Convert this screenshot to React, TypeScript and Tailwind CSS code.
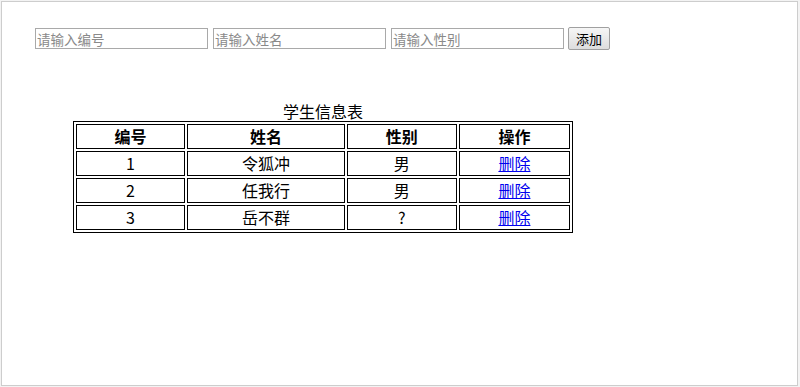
import React from "react";

const font = { fontFamily: '"Noto Sans CJK SC", "Noto Sans", sans-serif' };

const rows = [
  { id: "1", name: "令狐冲", sex: "男" },
  { id: "2", name: "任我行", sex: "男" },
  { id: "3", name: "岳不群", sex: "?" },
];

export default function App() {
  return (
    <div className="w-[800px] h-[387px] bg-[#f3f3f3] p-px" style={font}>
      <div className="h-[385px] w-[797px] border border-[#cdcdcd] bg-white">
        <div className="flex items-center gap-[5px] pl-[33px] pt-[25px]">
          <input
            className="h-[21px] w-[173px] border border-[#a9a9a9] px-[1px] text-[13.5px] leading-[19px] placeholder:text-[#8a8a8a] outline-none"
            placeholder="请输入编号"
          />
          <input
            className="h-[21px] w-[173px] border border-[#a9a9a9] px-[1px] text-[13.5px] leading-[19px] placeholder:text-[#8a8a8a] outline-none"
            placeholder="请输入姓名"
          />
          <input
            className="h-[21px] w-[173px] border border-[#a9a9a9] px-[1px] text-[13.5px] leading-[19px] placeholder:text-[#8a8a8a] outline-none"
            placeholder="请输入性别"
          />
          <button className="-ml-[1px] h-[23px] w-[42px] rounded-[2px] border border-[#a0a0a0] bg-gradient-to-b from-[#f6f6f6] to-[#dddddd] text-[13px] leading-[21px] text-black">
            添加
          </button>
        </div>
        <div className="pl-[71px] pt-[52px]">
          <table className="w-[500px] border-separate border-spacing-[2px] border border-black text-[16px] text-black">
            <caption className="h-[19px] text-center text-[16px] leading-[19px]">学生信息表</caption>
            <thead>
              <tr>
                <th className="h-[25px] w-[110px] border border-black p-0 text-center font-bold leading-[23px]">编号</th>
                <th className="h-[25px] w-[159px] border border-black p-0 text-center font-bold leading-[23px]">姓名</th>
                <th className="h-[25px] w-[111px] border border-black p-0 text-center font-bold leading-[23px]">性别</th>
                <th className="h-[25px] w-[112px] border border-black p-0 text-center font-bold leading-[23px]">操作</th>
              </tr>
            </thead>
            <tbody>
              {rows.map((r) => (
                <tr key={r.id}>
                  <td className="h-[25px] border border-black p-0 text-center leading-[23px]">{r.id}</td>
                  <td className="h-[25px] border border-black p-0 text-center leading-[23px]">{r.name}</td>
                  <td className="h-[25px] border border-black p-0 text-center leading-[23px]">{r.sex}</td>
                  <td className="h-[25px] border border-black p-0 text-center leading-[23px]">
                    <a href="#" className="text-[#0000ee] underline">删除</a>
                  </td>
                </tr>
              ))}
            </tbody>
          </table>
        </div>
      </div>
    </div>
  );
}
